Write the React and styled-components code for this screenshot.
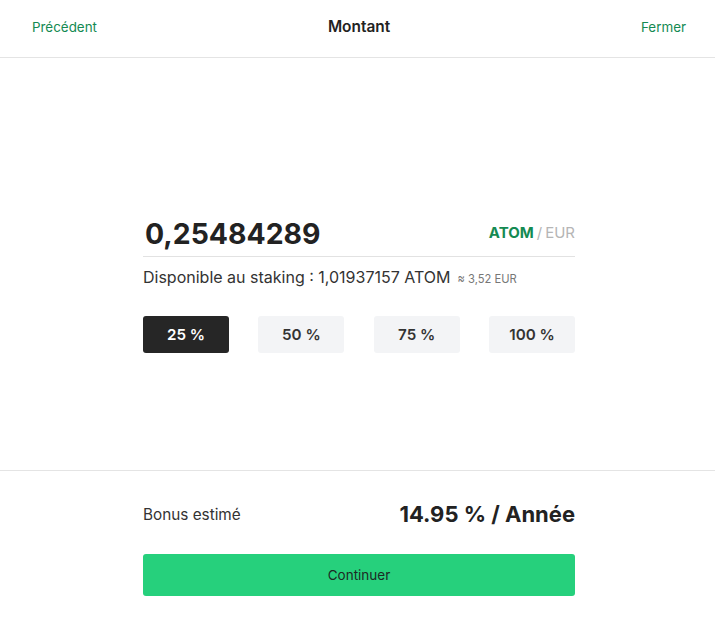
import React, { useState } from "react";
import styled, { createGlobalStyle } from "styled-components";

const Global = createGlobalStyle`
  html, body { margin: 0; padding: 0; background: #fff; }
  body { font-family: Inter, "Noto Sans", sans-serif; color: #222; }
  * { box-sizing: border-box; }
`;

const Page = styled.div`
  width: 715px;
  height: 623px;
  display: flex;
  flex-direction: column;
`;

const Header = styled.header`
  height: 58px;
  border-bottom: 1px solid #e4e4e4;
  display: grid;
  grid-template-columns: 1fr auto 1fr;
  align-items: center;
  padding: 0 29px 0 32px;
`;

const NavLink = styled.span`
  font-size: 13.4px;
  color: #148a52;
  justify-self: ${(p) => (p.$end ? "end" : "start")};
  margin-top: -4px;
`;

const Title = styled.h1`
  margin: -4px 0 0;
  font-size: 15.4px;
  font-weight: 600;
  color: #222;
`;

const Main = styled.main`
  flex: 1;
  padding: 157px 140px 0 143px;
`;

const AmountRow = styled.div`
  display: flex;
  align-items: center;
  justify-content: space-between;
  padding-bottom: 3px;
  border-bottom: 1px solid #e2e2e2;
`;

const Amount = styled.div`
  font-size: 28.4px;
  font-weight: 700;
  color: #222;
  line-height: 38px;
  padding-left: 2px;
`;

const Units = styled.div`
  font-size: 15px;
  font-weight: 400;
  color: #b5b5b5;
  margin-top: -3px;
`;

const Unit = styled.span`
  color: ${(p) => (p.$active ? "#148a52" : "#b5b5b5")};
  font-weight: ${(p) => (p.$active ? 700 : 400)};
`;

const Slash = styled.span`
  margin: 0 3px;
`;

const Available = styled.div`
  margin-top: 10px;
  font-size: 16px;
  color: #333;
  display: flex;
  align-items: baseline;
  gap: 7px;
`;

const Approx = styled.span`
  font-size: 11.2px;
  color: #777;
`;

const Presets = styled.div`
  margin-top: 29px;
  display: flex;
  justify-content: space-between;
`;

const Preset = styled.button`
  width: 86px;
  height: 37px;
  border: none;
  border-radius: 3px;
  font-family: inherit;
  font-size: 15.2px;
  font-weight: 600;
  cursor: pointer;
  background: ${(p) => (p.$active ? "#262626" : "#f3f4f6")};
  color: ${(p) => (p.$active ? "#fff" : "#333")};
`;

const Footer = styled.footer`
  border-top: 1px solid #e4e4e4;
  padding: 28px 140px 27px 143px;
`;

const BonusRow = styled.div`
  display: flex;
  justify-content: space-between;
  align-items: center;
  height: 30px;
`;

const BonusLabel = styled.span`
  font-size: 15.3px;
  color: #333;
`;

const BonusValue = styled.span`
  font-size: 22px;
  font-weight: 700;
  color: #222;
`;

const Continue = styled.button`
  margin-top: 25px;
  width: 100%;
  height: 42px;
  border: none;
  border-radius: 3px;
  background: #26d07c;
  color: #1d2a24;
  font-family: inherit;
  font-size: 13.5px;
  cursor: pointer;
`;

export default function App() {
  const [sel, setSel] = useState(25);
  return (
    <>
      <Global />
      <Page>
        <Header>
          <NavLink>Précédent</NavLink>
          <Title>Montant</Title>
          <NavLink $end>Fermer</NavLink>
        </Header>
        <Main>
          <AmountRow>
            <Amount>0,25484289</Amount>
            <Units>
              <Unit $active>ATOM</Unit>
              <Slash>/</Slash>
              <Unit>EUR</Unit>
            </Units>
          </AmountRow>
          <Available>
            <span>Disponible au staking : 1,01937157 ATOM</span>
            <Approx>≈ 3,52 EUR</Approx>
          </Available>
          <Presets>
            {[25, 50, 75, 100].map((v) => (
              <Preset key={v} $active={sel === v} onClick={() => setSel(v)}>
                {v} %
              </Preset>
            ))}
          </Presets>
        </Main>
        <Footer>
          <BonusRow>
            <BonusLabel>Bonus estimé</BonusLabel>
            <BonusValue>14.95 % / Année</BonusValue>
          </BonusRow>
          <Continue>Continuer</Continue>
        </Footer>
      </Page>
    </>
  );
}
